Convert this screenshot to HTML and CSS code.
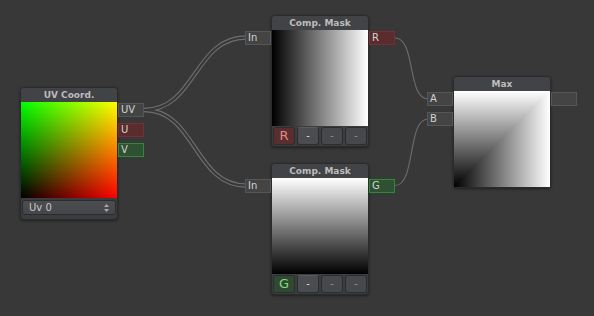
FILE: index.html
```html
<!DOCTYPE html>
<html>
<head>
<meta charset="utf-8">
<link rel="stylesheet" href="styles.css">
</head>
<body>
<div class="canvas">
  <svg class="wires" width="594" height="316" viewBox="0 0 594 316">
    <g class="dbl-outer">
      <path d="M144 110 C 196 110, 194 37.5, 246 37.5"/>
      <path d="M144 110 C 196 110, 194 185.5, 246 185.5"/>
    </g>
    <g class="dbl-inner">
      <path d="M144 110 C 196 110, 194 37.5, 246 37.5"/>
      <path d="M144 110 C 196 110, 194 185.5, 246 185.5"/>
    </g>
    <g class="single">
      <path d="M395 38 C 416 38, 407 99, 428 99"/>
      <path d="M395 185.5 C 416 185.5, 407 119, 428 119"/>
    </g>
  </svg>

  <div class="node node-uv">
    <div class="node-title">UV Coord.</div>
    <div class="preview preview-uv"></div>
    <div class="dropdown"><span>Uv 0</span>
      <svg class="updown" width="5" height="8" viewBox="0 0 5 8"><path d="M2.5 0 L5 3 L0 3 Z M0 5 L5 5 L2.5 8 Z"/></svg>
    </div>
    <div class="ports ports-out">
      <div class="port">UV</div>
      <div class="port port-r">U</div>
      <div class="port port-g">V</div>
    </div>
  </div>

  <div class="node node-mask1">
    <div class="node-title">Comp. Mask</div>
    <div class="preview preview-r"></div>
    <div class="btns">
      <div class="btn btn-r">R</div>
      <div class="btn btn-on">-</div>
      <div class="btn">-</div>
      <div class="btn">-</div>
    </div>
    <div class="ports ports-in">
      <div class="port">In</div>
    </div>
    <div class="ports ports-out">
      <div class="port port-r">R</div>
    </div>
  </div>

  <div class="node node-mask2">
    <div class="node-title">Comp. Mask</div>
    <div class="preview preview-g"></div>
    <div class="btns">
      <div class="btn btn-g">G</div>
      <div class="btn btn-on">-</div>
      <div class="btn">-</div>
      <div class="btn">-</div>
    </div>
    <div class="ports ports-in">
      <div class="port">In</div>
    </div>
    <div class="ports ports-out">
      <div class="port port-g">G</div>
    </div>
  </div>

  <div class="node node-max">
    <div class="node-title">Max</div>
    <div class="preview preview-max"></div>
    <div class="ports ports-in">
      <div class="port">A</div>
      <div class="port">B</div>
    </div>
    <div class="ports ports-out">
      <div class="port"></div>
    </div>
  </div>
</div>
</body>
</html>
```
FILE: styles.css
```css
html, body {
  margin: 0;
  padding: 0;
  background: #383838;
}
.canvas {
  position: relative;
  width: 594px;
  height: 316px;
  overflow: hidden;
  background: #383838;
  font-family: "DejaVu Sans", Verdana, sans-serif;
}
.wires {
  position: absolute;
  left: 0;
  top: 0;
}
.wires path {
  fill: none;
}
.dbl-outer path {
  stroke: #6e6e6e;
  stroke-width: 4.4;
}
.dbl-inner path {
  stroke: #383838;
  stroke-width: 2.2;
}
.single path {
  stroke: #6a6a6a;
  stroke-width: 1.2;
}
.node {
  position: absolute;
  width: 96px;
  display: flex;
  flex-direction: column;
  background: #3b3c3f;
  border: 1px solid #2a2b2d;
  border-radius: 4px;
  box-shadow: 0 1px 3px rgba(0, 0, 0, 0.45);
}
.node-uv { left: 20px; top: 87px; padding-bottom: 4px; }
.node-mask1 { left: 271px; top: 15px; padding-bottom: 1px; }
.node-mask2 { left: 271px; top: 163px; padding-bottom: 1px; }
.node-max { left: 453px; top: 76px; }
.node-title {
  height: 14px;
  line-height: 14px;
  text-align: center;
  font-size: 9px;
  font-weight: bold;
  color: #bcbcbc;
  background: #424347;
  border-radius: 3px 3px 0 0;
}
.preview {
  width: 96px;
  height: 96px;
}
.preview-uv {
  background-image: linear-gradient(to top, #000 0%, #0f0 100%), linear-gradient(to right, #000 0%, #f00 100%);
  background-blend-mode: screen;
}
.preview-r {
  background: linear-gradient(to right, #000 0%, #fff 100%);
}
.preview-g {
  background: linear-gradient(to bottom, #fff 0%, #000 100%);
}
.preview-max {
  background-image: linear-gradient(to top, #000 0%, #fff 100%), linear-gradient(to right, #000 0%, #fff 100%);
  background-blend-mode: lighten;
}
.dropdown {
  margin: 2px 1px 0;
  height: 13px;
  border: 1px solid #2b2c2e;
  border-radius: 3px;
  background: linear-gradient(#4c4d50, #45464a);
  display: flex;
  align-items: center;
  justify-content: space-between;
  padding: 0 6px;
  font-size: 10px;
  color: #c8c8c8;
}
.updown path { fill: #a8a8a8; }
.btns {
  display: flex;
  gap: 2px;
  margin: 1px 1px 0;
}
.btn {
  width: 20px;
  height: 16px;
  border: 1px solid #2c2d2f;
  border-radius: 3px;
  background: #47484b;
  color: #8e8e8e;
  font-size: 10px;
  line-height: 16px;
  text-align: center;
}
.btn-on {
  background: #4b4c50;
  border-top-color: #5a5b5f;
  color: #dcdcdc;
}
.btn-r {
  background: #5a2d2e;
  color: #e08787;
  font-size: 13px;
}
.btn-g {
  background: #2f4a30;
  color: #84d884;
  font-size: 13px;
}
.ports {
  position: absolute;
  top: 15px;
  display: flex;
  flex-direction: column;
  gap: 6px;
}
.ports-out { left: 100%; margin-left: 1px; }
.ports-in { right: 100%; margin-right: 1px; }
.port {
  width: 22px;
  height: 12px;
  padding-left: 2px;
  border: 1px solid #565656;
  background: #444444;
  color: #d2d2d2;
  font-size: 10px;
  line-height: 12px;
}
.port-r {
  background: #5a2c2d;
  border-color: #763033;
}
.port-g {
  background: #2e5231;
  border-color: #2f8a35;
}
```
